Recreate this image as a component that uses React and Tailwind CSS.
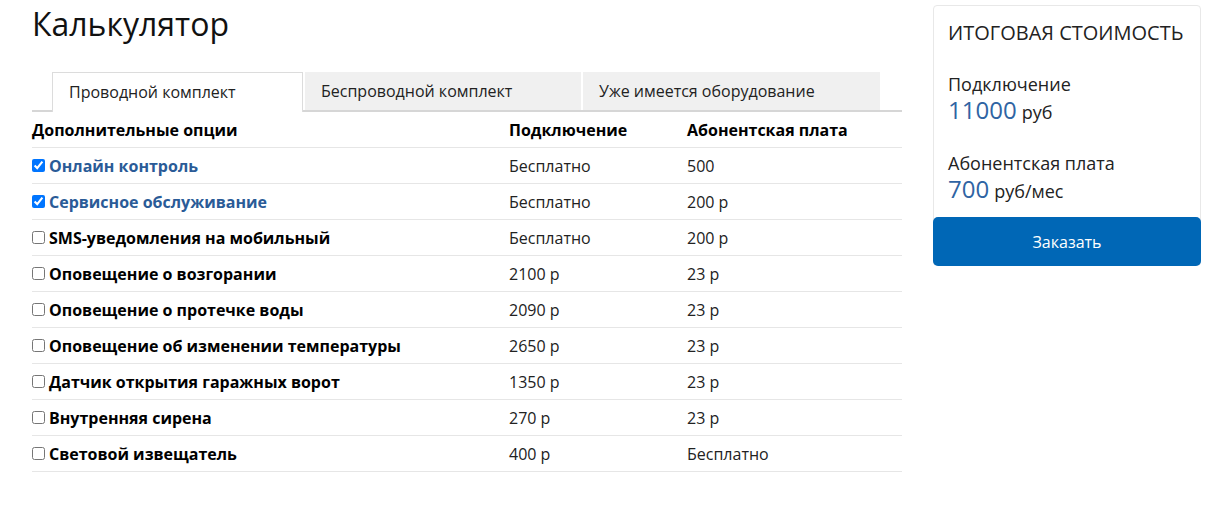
import { useState } from 'react'

const tabs = [
  { title: 'Проводной комплект', width: 'w-[251px]' },
  { title: 'Беспроводной комплект', width: 'w-[276px]' },
  { title: 'Уже имеется оборудование', width: 'w-[297px]' },
];

const options = [
  { name: 'Онлайн контроль', connect: 'Бесплатно', fee: '500', checked: true },
  { name: 'Сервисное обслуживание', connect: 'Бесплатно', fee: '200 р', checked: true },
  { name: 'SMS-уведомления на мобильный', connect: 'Бесплатно', fee: '200 р' },
  { name: 'Оповещение о возгорании', connect: '2100 р', fee: '23 р' },
  { name: 'Оповещение о протечке воды', connect: '2090 р', fee: '23 р' },
  { name: 'Оповещение об изменении температуры', connect: '2650 р', fee: '23 р' },
  { name: 'Датчик открытия гаражных ворот', connect: '1350 р', fee: '23 р' },
  { name: 'Внутренняя сирена', connect: '270 р', fee: '23 р' },
  { name: 'Световой извещатель', connect: '400 р', fee: 'Бесплатно' },
];

function Tabs({active, setActive}){
  return(
    <div className="flex gap-[2px] pl-[20px] border-b-2 border-[#d6d6d6] mt-[30px]">
      {tabs.map((tab, i) => (
        <button key={tab.title} onClick={() => setActive(i)}
          className={`${tab.width} h-[38px] text-left pl-[16px] text-[16px] text-[#222] ${i === active ? 'bg-white border border-b-0 border-[#dcdcdc] -mb-[2px] h-[40px] pb-[2px]' : 'bg-[#f0f0f0]'}`}
        >{tab.title}</button>
      ))}
    </div>
  );
}

function OptionRow({option, onToggle}){
  return(
    <div className="grid grid-cols-[477px_178px_1fr] h-[36px] items-center border-b border-[#e6e6e6] text-[16px]">
      <label className="flex items-center cursor-pointer">
        <input type="checkbox" checked={!!option.checked} onChange={onToggle}
          className="w-[13px] h-[13px] m-0 mr-[4px] accent-[#0075ff]" />
        <span className={`font-bold ${option.checked ? 'text-[#2a5b97]' : 'text-black'}`}>{option.name}</span>
      </label>
      <div className="text-[#222]">{option.connect}</div>
      <div className="text-[#222]">{option.fee}</div>
    </div>
  );
}

function Summary(){
  return(
    // Total cost card
    <div className="w-[268px] mt-[5px] border border-[#e8e8e8] rounded-[4px] flex flex-col text-[#222] self-start">
      <div className="px-[14px] pt-[14px]">
        <div className="text-[20px] leading-[26px] uppercase">Итоговая стоимость</div>
        <div className="text-[18px] leading-[24px] mt-[26px]">Подключение</div>
        <div className="flex items-baseline gap-[5px] h-[28px]"><span className="text-[24px] leading-[28px] text-[#2f64a3]">11000</span><span className="text-[18px] leading-[28px]">руб</span></div>
        <div className="text-[18px] leading-[24px] mt-[27px]">Абонентская плата</div>
        <div className="flex items-baseline gap-[5px] h-[28px]"><span className="text-[24px] leading-[28px] text-[#2f64a3]">700</span><span className="text-[18px] leading-[28px]">руб/мес</span></div>
      </div>
      <button className="-mx-px -mb-px mt-[14px] h-[49px] rounded-[5px] bg-[#0067b6] text-white text-[16px]">Заказать</button>
    </div>
  );
}

function App(){
  const [active, setActive] = useState(0);
  const [items, setItems] = useState(options);

  function toggle(index){
    setItems(prev => prev.map((item, i) => i === index ? {...item, checked: !item.checked} : item));
  }

  return(
    <div className="min-h-screen bg-white flex gap-[31px] pl-[32px] font-['Open_Sans',sans-serif]">
      <div className="w-[870px]">
        <h1 className="pt-[5px] text-[32px] leading-[37px] text-[#111]">Калькулятор</h1>
        <Tabs active={active} setActive={setActive} />
        <div className="grid grid-cols-[477px_178px_1fr] h-[36px] items-center border-b border-[#e6e6e6] text-[16px] font-bold text-black">
          <div>Дополнительные опции</div>
          <div>Подключение</div>
          <div>Абонентская плата</div>
        </div>
        {items.map((option, i) => <OptionRow key={option.name} option={option} onToggle={() => toggle(i)} />)}
      </div>
      <Summary />
    </div>
  );
}

export default App
